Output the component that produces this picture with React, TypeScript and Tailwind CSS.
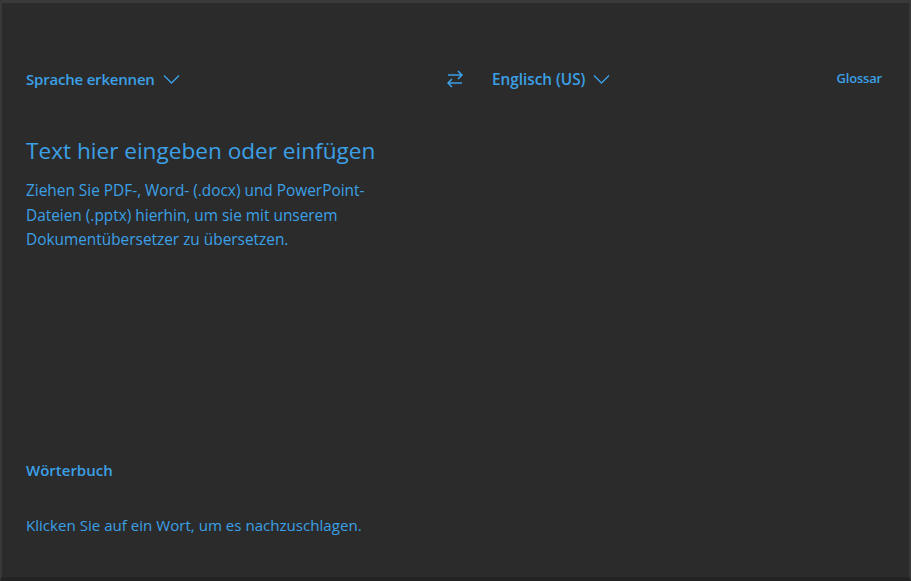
import React from "react";

const Chevron = () => (
  <svg width="17" height="10" viewBox="0 0 17 10" fill="none" className="ml-2">
    <path d="M1 1.5 L8.5 9 L16 1.5" stroke="#3ba0e6" strokeWidth="1.4" />
  </svg>
);

const SwapIcon = () => (
  <svg width="20" height="20" viewBox="0 0 20 20" fill="none">
    <path d="M3 6 H17 M13 2 L17 6 L13 10" stroke="#3ba0e6" strokeWidth="1.6" strokeLinejoin="round" />
    <path d="M17 14 H3 M7 10 L3 14 L7 18" stroke="#3ba0e6" strokeWidth="1.6" strokeLinejoin="round" />
  </svg>
);

const App = () => {
  return (
    <div
      className="flex h-[581px] w-[911px] flex-col overflow-hidden border-t-[3px] border-l-2 border-r-2 border-b-[4px] border-t-[#3a3a3a] border-l-[#383838] border-r-[#383838] border-b-[#232323] bg-[#2b2b2b] text-[#3ba0e6]"
      style={{ fontFamily: '"Open Sans", "Noto Sans", sans-serif' }}
    >
      {/* Language bar */}
      <div className="mt-[56px] flex h-[40px] items-center pl-6 pr-[27px]">
        <div className="flex w-[419px] items-center">
          <span className="text-[15px] font-semibold tracking-[-0.2px]">Sprache erkennen</span>
          <Chevron />
        </div>
        <SwapIcon />
        <div className="ml-[27px] flex items-center">
          <span className="text-[15.3px] font-semibold">Englisch (US)</span>
          <Chevron />
        </div>
        <span className="ml-auto text-[13px] font-semibold tracking-[-0.2px]">Glossar</span>
      </div>

      {/* Input area */}
      <div className="relative mt-[37px] pl-6">
        <div className="absolute -left-[2px] top-[2px] h-[24px] w-[2px] bg-[#3d6e93]" />
        <h1 className="text-[22.6px] leading-[30px]">Text hier eingeben oder einfügen</h1>
        <p className="mt-[13px] w-[380px] text-[15.4px] leading-[24.5px]">
          Ziehen Sie PDF-, Word- (.docx) und PowerPoint-
          <br />
          Dateien (.pptx) hierhin, um sie mit unserem
          <br />
          Dokumentübersetzer zu übersetzen.
        </p>
      </div>

      {/* Dictionary */}
      <div className="mt-auto mb-[40px] pl-6">
        <h2 className="text-[15px] font-semibold">Wörterbuch</h2>
        <p className="mt-[33px] text-[15.1px]">Klicken Sie auf ein Wort, um es nachzuschlagen.</p>
      </div>
    </div>
  );
};

export default App;
